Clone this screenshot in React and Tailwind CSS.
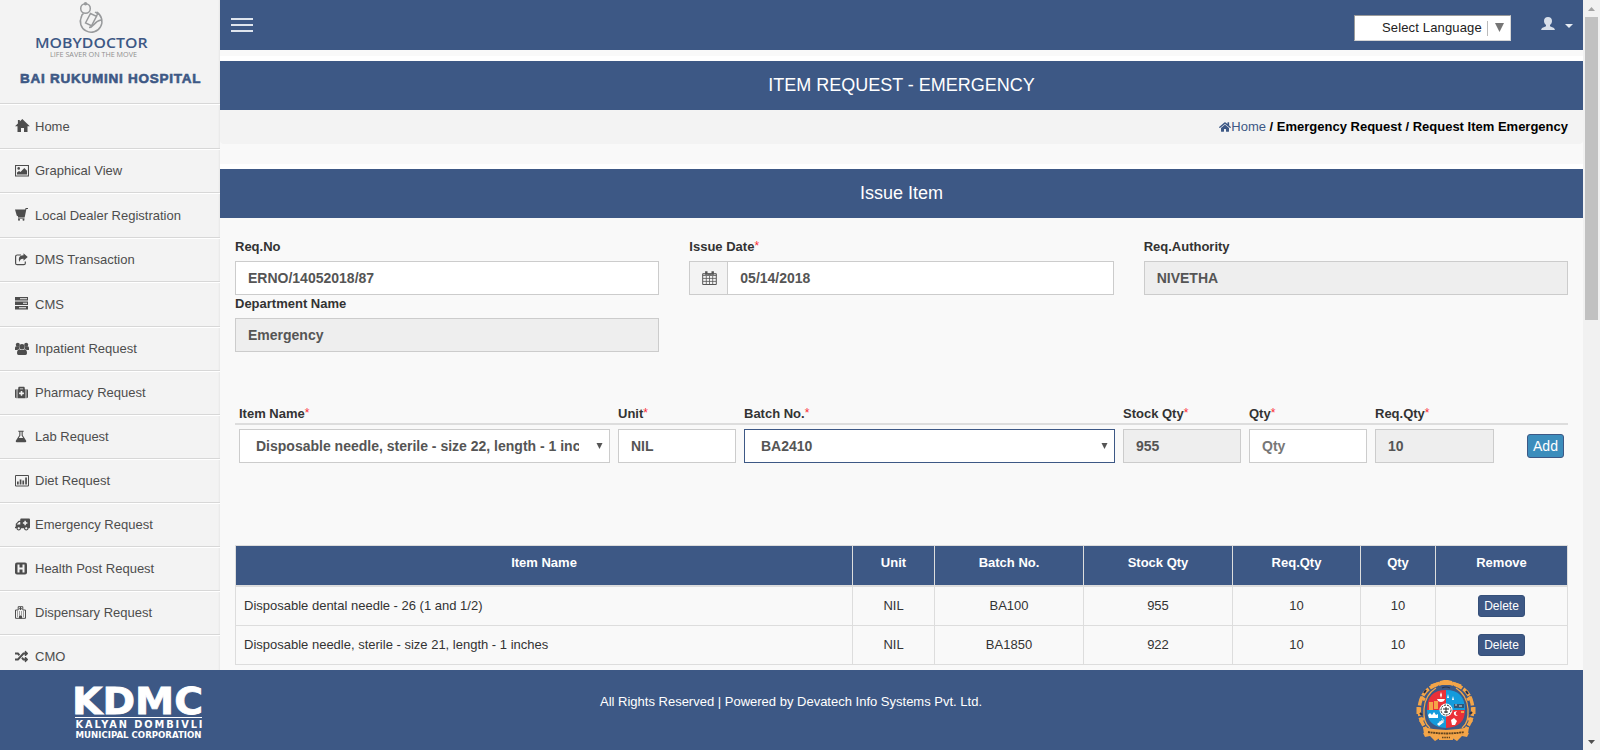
import React from "react";
import { FaAmbulance, FaMedkit, FaRandom, FaHome } from "react-icons/fa";

const ink = "#4d4d4d";

const Svg = ({ w = 14, children }) => (
  <svg width={w} height="14" viewBox={`0 0 ${w} 14`} fill={ink}>{children}</svg>
);

const HomeGlyph = () => (
  <svg width="15" height="14" viewBox="0 0 15 14" fill={ink}><path d="M7.300 0 14.800 7.300H12.500V13H9V9H6v4H2.500V7.300H-.1L2.900 4.400V1h1.900v1.500z" /></svg>
);
const PictureGlyph = () => (
  <Svg>
    <path d="M.5 1.500h13v10.500H.5z" fill="none" stroke={ink} strokeWidth="1.100" />
    <circle cx="3.700" cy="4.400" r="1.300" />
    <path d="M2 10.500V8.500l2-1.500 1.500 1L9.300 4 12 6.800v3.700z" />
  </Svg>
);
const CartGlyph = () => (
  <Svg>
    <path d="M0 1.500h10.200L10.600 0H13v1h-1.600L9.700 9.200H3V8.300L1.800 7.800z" />
    <path d="M3 9.600h6.500v1H3z" />
    <circle cx="4" cy="11.800" r="1" /><circle cx="8.500" cy="11.800" r="1" />
  </Svg>
);
const ShareGlyph = () => (
  <Svg>
    <path d="M6 2H2.200Q.6 2 .6 3.500v6.700q0 1.500 1.600 1.500h6.600q1.500 0 1.500-1.500V8.500" fill="none" stroke={ink} strokeWidth="1.200" />
    <path d="M8.500.2 12.700 4 8.500 7.700V5.700C6 5.600 5 6.200 4.600 9 2.500 5 4.800 2.200 8.500 2.200z" />
  </Svg>
);
const ServerGlyph = () => (
  <Svg>
    <path d="M0 0h13v3.500H0zM0 4.500h13V8H0zM0 9h13v3.500H0z" />
    <path d="M5 1.300h7v.9H5zM8 5.800h4v.9H8zM4 10.300h7v.9H4z" fill="#f3f3f3" />
  </Svg>
);
const FlaskGlyph = () => (
  <Svg>
    <path d="M3.300.8h5.400v1h-1V5.300l3.500 5.500q.4 1.400-.8 1.400H1.600Q.4 12.200.8 10.800l3.500-5.500V1.800h-1z" />
    <path d="M5.400 1.800h1.200v3.800L8.200 8.100H3.800l1.600-2.500z" fill="#f3f3f3" />
  </Svg>
);
const ChartGlyph = () => (
  <Svg>
    <path d="M.5 1.500h13v10.500H.5z" fill="none" stroke={ink} />
    <path d="M2 7.500h1.700v3H2zM4.700 5.500h1.700v5H4.700zM7.400 6.500h1.700v4H7.400zM10.200 3.500h1.700v7h-1.700z" />
  </Svg>
);
const HSquareGlyph = () => (
  <Svg>
    <rect y=".5" width="12" height="12" rx="2" />
    <path d="M2.500 2.500h2v3h3v-3h2v8h-2v-3h-3v3h-2z" fill="#f3f3f3" />
  </Svg>
);
const HospitalGlyph = () => (
  <Svg>
    <path d="M.5 4h2.700V.7h4.600V4h2.700v8.300H.5z" fill="none" stroke={ink} />
    <path d="M5 1h1v3H5zM4 2.200h3v1H4zM2 5.500h1v1H2zm2 0h1v1H4zm2 0h1v1H6zm2 0h1v1H8zM2 7.500h1v1H2zm2 0h1v1H4zm2 0h1v1H6zm2 0h1v1H8zM2 9.500h1v1H2zm6 0h1v1H8zM4 9.500h3v3H4z" />
  </Svg>
);
const UsersGlyph = () => (
  <Svg>
    <circle cx="2.800" cy="2.800" r="2" /><circle cx="11.200" cy="2.800" r="2" />
    <path d="M0 8V6q0-1.800 1.300-1.800h3Q3.500 5.500 4.500 7 3 7 2.500 8zM14 8V6q0-1.800-1.300-1.800h-3Q10.500 5.500 9.500 7q1.500 0 2 1z" />
    <circle cx="7" cy="4.700" r="2.700" />
    <path d="M4.500 7.200Q7 9 9.500 7.200 12 7.500 12 11.200q0 1.800-1.500 1.800h-7Q2 13 2 11.200 2 7.500 4.500 7.200z" />
  </Svg>
);

const nav = [
  ["Home", <HomeGlyph />, "h-[45px]"],
  ["Graphical View", <PictureGlyph />, "h-11"],
  ["Local Dealer Registration", <CartGlyph />, "h-[45px]"],
  ["DMS Transaction", <ShareGlyph />, "h-11"],
  ["CMS", <ServerGlyph />, "h-[45px]"],
  ["Inpatient Request", <UsersGlyph />, "h-11"],
  ["Pharmacy Request", <FaMedkit size={13} />, "h-11"],
  ["Lab Request", <FlaskGlyph />, "h-11"],
  ["Diet Request", <ChartGlyph />, "h-11"],
  ["Emergency Request", <FaAmbulance size={15} className="-scale-x-100" />, "h-11"],
  ["Health Post Request", <HSquareGlyph />, "h-11"],
  ["Dispensary Request", <HospitalGlyph />, "h-11"],
  ["CMO", <FaRandom size={13} />, "h-11"],
];

function BrandLogo() {
  return (
    <svg width="120" height="60" viewBox="0 0 120 60" className="ml-[35px] block">
      <g fill="none" stroke="#989a9c" strokeWidth="1.500">
        <path d="M46.500 15.500a10.800 10.800 0 1 0 15-4.500" />
        <circle cx="50.500" cy="7.500" r="4.800" />
        <path d="M48.500 12.500q-2 1-2.200 4M60 11l3 2-2 2" />
        <circle cx="50.500" cy="2.800" r="1" />
        <path d="m50.500 22 5-9.500 6 2.800-5 9.500zM54 26.500c5 0 5-6.500 12-7.500" />
      </g>
      <text x="0" y="46.500" textLength="112.500" lengthAdjust="spacingAndGlyphs" fill="#3d5885" className="font-['Open_Sans',sans-serif] text-[15px] font-semibold">MOBYDOCTOR</text>
      <text x="15" y="56" textLength="87" lengthAdjust="spacingAndGlyphs" fill="#8f8f8f" className="font-['Open_Sans',sans-serif] text-[7.500px]">LIFE SAVER ON THE MOVE</text>
    </svg>
  );
}

function Sidebar() {
  return (
    <aside className="flex w-[220px] shrink-0 flex-col overflow-hidden bg-[#f3f3f3] shadow-[inset_-2px_0_2px_-1px_rgba(0,0,0,0.05)]">
      <div className="h-[104px] shrink-0 border-b border-[#d7d7d7] pt-px">
        <BrandLogo />
        <div className="mt-[9px] pl-5 text-[13.500px] leading-[18px] font-bold tracking-[0.750px] whitespace-nowrap text-[#3d5885] [-webkit-text-stroke:0.600px_#3d5885]">BAI RUKUMINI HOSPITAL</div>
      </div>
      {nav.map(([label, icon, h]) => (
        <a key={label} className={`${h} flex shrink-0 items-center border-t border-b border-t-white border-b-[#d7d7d7] pl-[15px] text-[#4d4d4d]`}>
          <span className="mr-1.5 mb-px w-3.5 shrink-0">{icon}</span>
          <span className="text-[13px] whitespace-nowrap">{label}</span>
        </a>
      ))}
    </aside>
  );
}

function TopBar() {
  return (
    <header className="flex h-[50px] items-start bg-[#3d5885]">
      <div className="mt-[18px] ml-[11px] flex w-[22px] flex-col gap-1">
        <i className="h-0.5 bg-[#dfe5ee]" /><i className="h-0.5 bg-[#dfe5ee]" /><i className="h-0.5 bg-[#dfe5ee]" />
      </div>
      <div className="mt-[15px] ml-auto flex h-[26px] w-[157px] items-center border border-[#d5d5d5] border-t-[#9b9b9b] border-l-[#9b9b9b] bg-white pl-[27px] text-[13px] text-[#222]">
        <span className="w-[105px] tracking-[0.150px] whitespace-nowrap">Select Language</span>
        <i className="h-[15px] w-px bg-[#bbb]" />
        <svg width="9" height="9" viewBox="0 0 9 9" className="mb-0.5 ml-[7px]" fill="#767676"><path d="M0 0h9L4.500 9z" /></svg>
      </div>
      <svg width="14" height="13" viewBox="0 0 14 13" className="mt-[17px] ml-[30px]" fill="#d8dfea"><path d="M7 0c2.500 0 4 1.500 4 4 0 2-1 3.200-2 4v1.200L13 11l1 2H0l1-2 4-1.800V8C4 7.200 3 6 3 4c0-2.500 1.500-4 4-4z" /></svg>
      <svg width="8" height="4" viewBox="0 0 8 4" className="mt-6 mr-[10px] ml-[10px]" fill="#e6ebf3"><path d="M0 0h8L4 4z" /></svg>
    </header>
  );
}

const Star = () => <sup className="relative -top-px text-[12px] leading-none font-normal text-red-500">*</sup>;

const Label = ({ children, star, className = "" }) => (
  <label className={`block h-[19px] text-[13px] leading-[19px] font-bold whitespace-nowrap text-[#333] ${className}`}>{children}{star && <Star />}</label>
);

const Field = ({ value, disabled, placeholder }) => (
  <input
    readOnly
    value={value}
    placeholder={placeholder}
    className={`block h-[34px] w-full border border-[#ccc] px-3 text-sm font-bold text-[#555] outline-none placeholder:text-[#777] ${disabled ? "bg-[#eee]" : "bg-white"}`}
  />
);

const Picker = ({ value, active }) => (
  <div className={`flex h-[34px] items-center border bg-white pr-[6px] pl-4 text-sm font-bold text-[#555] ${active ? "border-[#3d5885]" : "border-[#ccc]"}`}>
    <span className="max-w-[323px] flex-1 overflow-hidden whitespace-nowrap">{value}</span>
    <svg width="7" height="6" viewBox="0 0 7 6" className="ml-auto" fill="#555"><path d="M.5 0h6L3.500 6z" /></svg>
  </div>
);

function CalendarGlyph() {
  return (
    <svg width="15" height="14" viewBox="0 0 15 14" fill="none" stroke="#555" className="ml-0.5">
      <path d="M.7 2.700h13.600v10.800H.7zM.7 4.300h13.600" />
      <path d="M1 7.400h13M1 10.400h13M4.300 5v8.500M7.500 5v8.500M10.700 5v8.500" strokeWidth=".8" />
      <path d="M4.300.3v3.500M10.700.3v3.500" strokeWidth="2.400" />
      <path d="M5.500 3.200h4" strokeWidth="1.200" />
    </svg>
  );
}

const Band = ({ children, className = "" }) => (
  <div className={`border-t-[5px] border-white ${className}`}>
    <h2 className="flex h-[49px] items-center justify-center bg-[#3d5885] pb-0.5 text-lg text-white">{children}</h2>
  </div>
);

const itemCols = "grid grid-cols-[379px_126px_379px_126px_126px_127px_70px]";

function RequestForm() {
  return (
    <>
      <section className="grid grid-cols-3 gap-x-[30px] px-[15px] pt-[19px]">
        <div><Label className="mb-[5px]">Req.No</Label><Field value="ERNO/14052018/87" /></div>
        <div>
          <Label className="mb-[5px]" star>Issue Date</Label>
          <div className="flex">
            <span className="flex w-[38px] shrink-0 items-center justify-center border border-r-0 border-[#ccc] bg-[#f3f3f3]"><CalendarGlyph /></span>
            <Field value="05/14/2018" />
          </div>
        </div>
        <div><Label className="mb-[5px]">Req.Authority</Label><Field value="NIVETHA" disabled /></div>
        <div className="-mt-px"><Label className="mb-[5px]">Department Name</Label><Field value="Emergency" disabled /></div>
      </section>
      <section className="mx-[15px] mt-[52px]">
        <div className={`${itemCols} border-b-2 border-[#ddd]`}>
          {["Item Name", "Unit", "Batch No.", "Stock Qty", "Qty", "Req.Qty"].map((t) => (
            <Label key={t} star className="px-1">{t}</Label>
          ))}
        </div>
        <div className={`${itemCols} pt-1`}>
          <div className="px-1"><Picker value="Disposable needle, sterile - size 22, length - 1 inches" /></div>
          <div className="px-1"><Field value="NIL" /></div>
          <div className="px-1"><Picker value="BA2410" active /></div>
          <div className="px-1"><Field value="955" disabled /></div>
          <div className="px-1"><Field value="" placeholder="Qty" /></div>
          <div className="px-1"><Field value="10" disabled /></div>
          <div className="flex items-center justify-end pr-1">
            <button className="h-6 w-[37px] rounded-[3px] border border-[#3d5885] bg-[#3c8dbc] text-sm leading-none text-white">Add</button>
          </div>
        </div>
      </section>
    </>
  );
}

const rows = [
  ["Disposable dental needle - 26 (1 and 1/2)", "NIL", "BA100", "955", "10", "10"],
  ["Disposable needle, sterile - size 21, length - 1 inches", "NIL", "BA1850", "922", "10", "10"],
];

function ItemTable() {
  return (
    <table className="mt-[82px] ml-[15px] w-[1333px] table-fixed border-collapse text-[13px] text-[#333]">
      <colgroup>
        <col className="w-[617px]" /><col className="w-[82px]" /><col className="w-[149px]" /><col className="w-[149px]" /><col className="w-[128px]" /><col className="w-[75px]" /><col />
      </colgroup>
      <thead>
        <tr className="h-10 bg-[#3d5885] text-white">
          {["Item Name", "Unit", "Batch No.", "Stock Qty", "Req.Qty", "Qty", "Remove"].map((t) => (
            <th key={t} className="border border-b-2 border-[#ddd] pb-[5px] font-bold">{t}</th>
          ))}
        </tr>
      </thead>
      <tbody>
        {rows.map((r, n) => (
          <tr key={r[2]} className={n ? "h-[39px]" : "h-10"}>
            {r.map((c, i) => (
              <td key={i} className={`border border-[#ddd] ${i ? "text-center" : "pl-2"}`}>{c}</td>
            ))}
            <td className="border border-[#ddd] px-0 text-center">
              <button className="mx-auto block h-[22px] w-[47px] rounded-[3px] border border-[#365079] bg-[#3d5885] text-xs leading-none text-white">Delete</button>
            </td>
          </tr>
        ))}
      </tbody>
    </table>
  );
}

function Emblem() {
  return (
    <svg width="60" height="64" viewBox="0 0 60 64">
      <g fill="none" stroke="#f4a548">
        <path d="M22 5Q7 10 4 24T10 50M38 5q15 5 18 19T50 50" strokeWidth="3.500" strokeDasharray="9 1.500" />
        <path d="M20 9Q9 16 8 30t6 19M40 9q11 7 12 21t-6 19" strokeWidth="1.300" />
        <path d="M15 7l9-3M36 4l9 3M5 18l4 3M55 18l-4 3M2 28v7M58 28v7M4 43l4-4M56 43l-4-4" strokeWidth="3" />
      </g>
      <path d="M24 2l4-1h4l4 1 1 5-3-1h-8l-3 1z" fill="#f4a548" />
      <path d="M8 14l2-3M50 12l2 3M4 34l2 2M54 35l2-2" stroke="#27304a" strokeWidth="2" />
      <path d="M30 31V11Q11 11 11 31z" fill="#ea3038" />
      <path d="M30 31V11q19 0 19 20z" fill="#149bdc" />
      <path d="M30 31H11q0 17 19 18z" fill="#149bdc" />
      <path d="M30 31h19q0 17-19 18z" fill="#ea3038" />
      <path d="M13 23h4v8h-4zM18 22h4v8h-4z" fill="#f4a548" />
      <path d="M21 20h8q-1 3-4 3t-4-3zM24 16l1-3 1 3-1 3zM12 36l2-2 2 2 2-3 2 3 2-1v4h-9zM21 45l5-4 2 2-5 4zM32 15l1 4h-2zM37 17l1 4h-2z" fill="#fff" />
      <path d="M38 25h10v4H38z" fill="#315675" />
      <path d="M39 26h2M43 27h3M26 39l2 3M23 43h4" stroke="#d9d9d9" />
      <path d="M41 32q-3 3 1 5-5 0-4-4zM35 41l3-2 3 3-2 4h-3z" fill="#fff" />
      <path d="M45 32h3v2h-3z" fill="#f4a548" />
      <circle cx="30" cy="31" r="6.500" fill="#fff" />
      <circle cx="30" cy="31" r="5" fill="none" stroke="#222" strokeDasharray="2 1" />
      <path d="M27 30h6M28 33h4M30 28v6" stroke="#222" />
      <path d="M7 48q23 6 46 0l-1 7q-22 4-44 0z" fill="#f4a548" />
      <path d="M7 54l2 4 5-1 5 5 8-5h6l8 5 5-5 5 1 2-4-10 2H17z" fill="#f4a548" />
      <path d="M12 53q18 3 36 0" fill="none" stroke="#60431f" strokeWidth="1.800" strokeDasharray="2 .6" />
      <path d="M23 56h14v5H23z" fill="#f4a548" />
      <path d="M26 58.500h8" stroke="#60431f" strokeWidth="1.500" strokeDasharray="1.500 .8" />
      <path d="M26 9q4-2 8 0" fill="none" stroke="#27304a" strokeWidth="1.200" />
    </svg>
  );
}

function Footer() {
  return (
    <footer className="flex h-20 shrink-0 items-start bg-[#3d5885] text-white">
      <svg width="134" height="70" viewBox="0 0 134 70" className="mt-1.5 ml-[73px]" fill="#fff">
        <g className="font-['DejaVu_Sans',sans-serif] font-bold">
          <text x="-1" y="38" textLength="131" lengthAdjust="spacingAndGlyphs" stroke="#fff" strokeWidth=".8" className="text-[38px]">KDMC</text>
          <path d="M2 41h127v1H2z" />
          <text x="2.500" y="52" textLength="127" className="text-[9.800px]">KALYAN DOMBIVLI</text>
          <text x="2.500" y="61.500" textLength="126" lengthAdjust="spacingAndGlyphs" className="text-[8.200px]">MUNICIPAL CORPORATION</text>
        </g>
      </svg>
      <p className="mt-[22px] ml-[393px] text-[13px] leading-5 whitespace-nowrap">All Rights Reserved | Powered by Devatech Info Systems Pvt. Ltd.</p>
      <div className="mt-[9px] mr-[107px] ml-auto"><Emblem /></div>
    </footer>
  );
}

export default function App() {
  return (
    <div className="flex h-[750px] w-[1600px] overflow-hidden bg-[#f9f9f9] font-['Liberation_Sans',Arial,sans-serif]">
      <div className="flex w-[1583px] flex-col">
        <div className="flex h-[670px]">
          <Sidebar />
          <main className="w-[1363px]">
            <TopBar />
            <Band className="mt-1.5">ITEM REQUEST - EMERGENCY</Band>
            <nav className="flex h-[34px] items-center justify-end rounded-b bg-[#f3f3f3] pr-[15px] pb-px text-[13px] font-bold whitespace-pre text-black">
              <FaHome size={12} color="#3d5885" /><span className="font-normal text-[#3d5885]">Home</span> / Emergency Request / Request Item Emergency
            </nav>
            <Band className="mt-5">Issue Item</Band>
            <RequestForm />
            <ItemTable />
          </main>
        </div>
        <Footer />
      </div>
      <div className="flex w-[17px] flex-col items-center bg-[#f1f1f1]">
        <svg width="17" height="17" viewBox="0 0 17 17" fill="#a3a3a3"><path d="M5 11h7L8.500 7z" /></svg>
        <div className="h-[303px] w-[13px] bg-[#c1c1c1]" />
        <svg width="17" height="17" viewBox="0 0 17 17" className="mt-auto" fill="#505050"><path d="M5 7h7l-3.500 4z" /></svg>
      </div>
    </div>
  );
}
